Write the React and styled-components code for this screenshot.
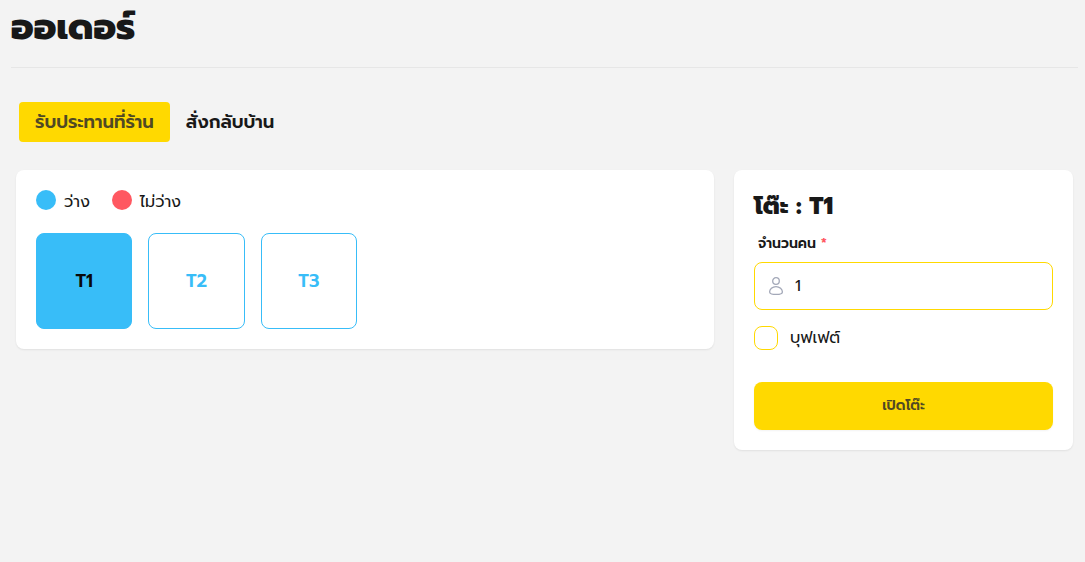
import React, { useState } from "react";
import styled, { createGlobalStyle } from "styled-components";

const Global = createGlobalStyle`
  *, *::before, *::after { box-sizing: border-box; }
  body {
    margin: 0;
    background: #f3f3f3;
    color: #181818;
    font: 16px/24px "Prompt", "Kanit", "Open Sans", "Noto Sans", "Noto Sans Thai", sans-serif;
  }
  button, input { font: inherit; color: inherit; }
  button { cursor: pointer; }
`;
const Page = styled.main`padding: 7px 7px 20px 11px;`;
const Title = styled.h1`
  margin: 0; padding-bottom: 20px; border-bottom: 1px solid #e6e6e6;
  font-size: 36px; line-height: 40px; font-weight: 800;
`;
const Tabs = styled.div`display: flex; margin: 34px 8px 28px;`;
const Tab = styled.button`
  height: 40px; padding: 0 16px; border: 0; border-radius: 4px;
  background: ${(p) => (p.$active ? "#ffd900" : "transparent")};
  color: ${(p) => (p.$active ? "#504924" : "#181818")};
  font-size: 18px; line-height: 28px; font-weight: 600;
`;
const Columns = styled.div`
  display: grid; grid-template-columns: minmax(0, 698fr) minmax(0, 339fr);
  gap: 20px; align-items: start; padding: 0 5px;
`;
const Card = styled.section`
  padding: 20px; border-radius: 8px; background: #fff;
  box-shadow: 0 1px 2px rgba(0, 0, 0, 0.08);
`;
const Legend = styled.div`display: flex; gap: 22px; margin-bottom: 19px;`;
const LegendItem = styled.span`display: flex; align-items: flex-start; gap: 8px;`;
const Dot = styled.i`width: 20px; height: 20px; border-radius: 50%; background: ${(p) => p.$color};`;
const Tables = styled.div`display: grid; grid-template-columns: repeat(6, 1fr); gap: 16px;`;
const TableButton = styled.button`
  height: 96px; padding: 0; border: 1px solid #38bdf8; border-radius: 8px;
  background: ${(p) => (p.$active ? "#38bdf8" : "#fff")};
  color: ${(p) => (p.$active ? "#09090b" : "#38bdf8")};
  font-size: 18px; font-weight: 600;
`;
const Heading = styled.h2`margin: 0 0 4px; font-size: 24px; line-height: 32px; font-weight: 800;`;
const FieldLabel = styled.label`
  display: block; padding: 8px 4px; font-size: 14px; line-height: 20px; font-weight: 600;
`;
const Required = styled.span`color: #ff5861;`;
const Field = styled.div`
  display: flex; align-items: center; gap: 11px; height: 48px; padding: 0 13px;
  border: 1px solid #ffd900; border-radius: 8px;
`;
const FieldInput = styled.input`
  flex: 1; min-width: 0; padding: 0; border: 0; outline: 0; background: transparent;
`;
const CheckRow = styled.label`display: flex; align-items: center; gap: 12px; margin: 16px 0 32px;`;
const Checkbox = styled.input`
  appearance: none; width: 24px; height: 24px; margin: 0;
  border: 1px solid #ffd900; border-radius: 8px;
  &:checked { background: #ffd900; }
`;
const Submit = styled.button`
  display: block; width: 100%; height: 48px; border: 0; border-radius: 8px;
  background: #ffd900; color: #504924; font-size: 14px; line-height: 20px; font-weight: 600;
  box-shadow: 0 1px 2px rgba(0, 0, 0, 0.05);
`;

const PersonIcon = () => (
  <svg width="16" height="20" viewBox="0 0 16 20" fill="none" stroke="#a3a8b8" strokeWidth="1.3" aria-hidden="true">
    <circle cx="8" cy="5" r="3.3" />
    <path d="M8 10.6c3.7 0 6.4 2.9 6.4 5.3 0 1.7-3 2.5-6.4 2.5s-6.4-.8-6.4-2.5c0-2.4 2.7-5.3 6.4-5.3z" />
  </svg>
);

export default function App() {
  const [mode, setMode] = useState(0);
  const [table, setTable] = useState("T1");
  return (
    <>
      <Global />
      <Page>
        <Title>ออเดอร์</Title>
        <Tabs>
          {["รับประทานที่ร้าน", "สั่งกลับบ้าน"].map((name, i) => (
            <Tab key={name} type="button" $active={i === mode} onClick={() => setMode(i)}>{name}</Tab>
          ))}
        </Tabs>
        <Columns>
          <Card>
            <Legend>
              <LegendItem><Dot $color="#38bdf8" />ว่าง</LegendItem>
              <LegendItem><Dot $color="#ff5861" />ไม่ว่าง</LegendItem>
            </Legend>
            <Tables>
              {["T1", "T2", "T3"].map((t) => (
                <TableButton key={t} type="button" $active={t === table} onClick={() => setTable(t)}>{t}</TableButton>
              ))}
            </Tables>
          </Card>
          <Card as="form" onSubmit={(e) => e.preventDefault()}>
            <Heading>โต๊ะ : {table}</Heading>
            <FieldLabel htmlFor="people">จำนวนคน <Required>*</Required></FieldLabel>
            <Field>
              <PersonIcon />
              <FieldInput id="people" type="text" inputMode="numeric" defaultValue="1" />
            </Field>
            <CheckRow>
              <Checkbox type="checkbox" />
              บุฟเฟต์
            </CheckRow>
            <Submit type="submit">เปิดโต๊ะ</Submit>
          </Card>
        </Columns>
      </Page>
    </>
  );
}
